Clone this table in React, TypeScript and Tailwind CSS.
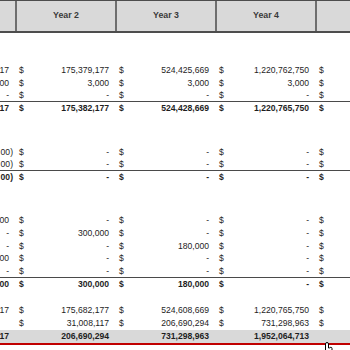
type Cell = string

interface RowSpec {
  h: string
  tail: Cell
  vals: Cell[]
  bold?: boolean
  total?: boolean
}

const font = { fontFamily: '"Liberation Sans", Arial, sans-serif' }

function Value({ v }: { v: Cell }) {
  const neg = v.endsWith(')')
  return <span className={neg ? 'pr-[2px]' : 'pr-[6px]'}>{v}</span>
}

function DataRow({ row }: { row: RowSpec }) {
  return (
    <div
      className={`grid grid-cols-[15px_100px_100px_100px_35px] items-center leading-none ${row.h} ${
        row.bold ? 'font-bold' : ''
      } ${row.total ? 'bg-[#d9d9d9]' : ''}`}
    >
      <div className="flex justify-end whitespace-nowrap">
        <Value v={row.tail} />
      </div>
      {row.vals.map((v, i) => (
        <div key={i} className="flex justify-between whitespace-nowrap">
          <span className="pl-[4px]">{row.total ? '' : '$'}</span>
          <Value v={v} />
        </div>
      ))}
      <div className="pl-[4px]">{row.total ? '' : '$'}</div>
    </div>
  )
}

// line = index of the subtotal row that gets the rule above it
const sections: { gap: string; rows: RowSpec[]; line: number }[] = [
  {
    gap: 'h-[31px]',
    line: 3,
    rows: [
      { h: 'h-[13px]', tail: '17', vals: ['175,379,177', '524,425,669', '1,220,762,750'] },
      { h: 'h-[12px]', tail: '00', vals: ['3,000', '3,000', '3,000'] },
      { h: 'h-[12px]', tail: '-', vals: ['-', '-', '-'] },
      { h: 'h-[12px]', tail: '17', vals: ['175,382,177', '524,428,669', '1,220,765,750'], bold: true },
    ],
  },
  {
    gap: 'h-[32px]',
    line: 2,
    rows: [
      { h: 'h-[12px]', tail: '00)', vals: ['-', '-', '-'] },
      { h: 'h-[12px]', tail: '00)', vals: ['-', '-', '-'] },
      { h: 'h-[12px]', tail: '00)', vals: ['-', '-', '-'], bold: true },
    ],
  },
  {
    gap: 'h-[31px]',
    line: 5,
    rows: [
      { h: 'h-[13px]', tail: '00', vals: ['-', '-', '-'] },
      { h: 'h-[13px]', tail: '-', vals: ['300,000', '-', '-'] },
      { h: 'h-[12px]', tail: '-', vals: ['-', '180,000', '-'] },
      { h: 'h-[13px]', tail: '00', vals: ['-', '-', '-'] },
      { h: 'h-[12px]', tail: '-', vals: ['-', '-', '-'] },
      { h: 'h-[12px]', tail: '00', vals: ['300,000', '180,000', '-'], bold: true },
    ],
  },
]

export default function App() {
  return (
    <div className="relative w-[350px] h-[350px] overflow-hidden bg-white text-[8.6px] text-[#1e1e1e]" style={font}>
      {/* Header */}
      <div className="grid grid-cols-[15px_100px_100px_100px_35px] h-[33px] bg-[#d9d9d9] border-t border-b-2 border-[#4d4d4d] text-[#3a3a3a] font-bold text-[8.8px]">
        <div />
        {['Year 2', 'Year 3', 'Year 4'].map((y) => (
          <div key={y} className="flex items-center justify-center border-l-2 border-[#6e6e6e]">
            {y}
          </div>
        ))}
        <div className="border-l-2 border-[#6e6e6e]" />
      </div>

      {sections.map((s, si) => (
        <div key={si}>
          <div className={s.gap} />
          {s.rows.map((r, ri) => (
            <div key={ri}>
              {ri === s.line && <div className="h-px bg-[#4a4a4a]" />}
              <DataRow row={r} />
            </div>
          ))}
        </div>
      ))}

      {/* Totals */}
      <div className="h-[14px]" />
      <DataRow row={{ h: 'h-[13px]', tail: '17', vals: ['175,682,177', '524,608,669', '1,220,765,750'] }} />
      <DataRow row={{ h: 'h-[12px]', tail: '', vals: ['31,008,117', '206,690,294', '731,298,963'] }} />
      <div className="h-px" />
      <DataRow
        row={{ h: 'h-[13px]', tail: '17', vals: ['206,690,294', '731,298,963', '1,952,064,713'], bold: true, total: true }}
      />
      <div className="h-[2px] bg-[#c00000]" />

      {/* mouse pointer */}
      <svg className="absolute left-[320px] top-[341px]" width="14" height="12" viewBox="0 0 14 12">
        <path
          d="M5.5 12 V3 a1.5 1.5 0 0 1 3 0 V7 h1.2 a1.2 1.2 0 0 1 2.3 0.6 V12"
          fill="#fff"
          stroke="#000"
          strokeWidth="1"
        />
      </svg>
    </div>
  )
}
